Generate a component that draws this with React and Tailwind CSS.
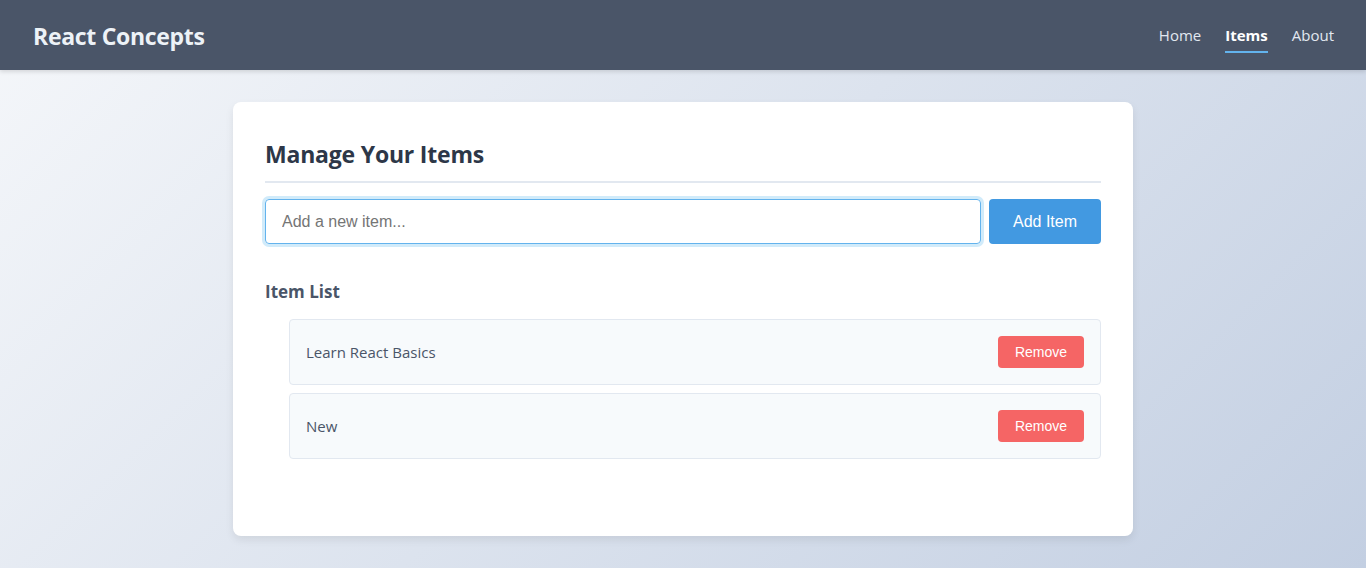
import React from "react";

export default function App() {
  const items = ["Learn React Basics", "New"];
  return (
    <div
      className="min-h-[568px] bg-[linear-gradient(135deg,#f5f7fa_0%,#c3cfe2_100%)]"
      style={{ fontFamily: '"Open Sans", "Noto Sans", sans-serif' }}
    >
      <header className="h-[70px] bg-[#4a5568] flex items-center justify-between pl-[33px] pr-[32px] shadow-[0_2px_4px_rgba(0,0,0,0.12)] relative">
        <h1 className="text-[23px] font-bold text-[#edf2f7] tracking-[-0.3px] mt-[3px]">React Concepts</h1>
        <nav className="self-stretch flex items-end pb-[17px] gap-[24px] text-[15px] text-[#e2e8f0]">
          <a className="leading-[22px] pb-[5px] border-b-2 border-transparent">Home</a>
          <a className="leading-[22px] pb-[5px] border-b-2 border-[#63b3ed] font-bold text-white">Items</a>
          <a className="leading-[22px] pb-[5px] border-b-2 border-transparent">About</a>
        </nav>
      </header>
      <main className="pt-[32px] pb-[32px] flex justify-center">
        <div className="w-[900px] bg-white rounded-[8px] shadow-[0_4px_8px_rgba(0,0,0,0.08)] px-[32px] pt-[32px] pb-[77px]">
          <h2 className="text-[23px] font-bold text-[#2d3748] leading-[36px] pt-[2px] pb-[9px] border-b-2 border-[#e2e8f0] tracking-[-0.2px]">
            Manage Your Items
          </h2>
          <div className="flex gap-[8px] mt-[16px]">
            <input
              className="flex-1 h-[45px] px-[16px] border border-[#63b3ed] rounded-[4px] text-[16px] text-[#2d3748] outline-none ring-[3px] ring-[#bee3f8]/70 placeholder:text-[#757575]"
              style={{ fontFamily: '"Liberation Sans", Arial, sans-serif' }}
              placeholder="Add a new item..."
            />
            <button
              className="w-[112px] h-[45px] bg-[#4299e1] text-white text-[16px] rounded-[4px]"
              style={{ fontFamily: '"Liberation Sans", Arial, sans-serif' }}
            >
              Add Item
            </button>
          </div>
          <h3 className="mt-[34px] text-[17px] font-bold text-[#4a5568] leading-[27px]">Item List</h3>
          <ul className="mt-[14px] pl-[24px] flex flex-col gap-[8px]">
            {items.map((it) => (
              <li
                key={it}
                className="flex items-center justify-between bg-[#f7fafc] border border-[#e2e8f0] rounded-[4px] p-[16px]"
              >
                <span className="text-[15px] text-[#4a5568]">{it}</span>
                <button
                  className="w-[86px] h-[32px] bg-[#f56565] text-white text-[14px] rounded-[4px]"
                  style={{ fontFamily: '"Liberation Sans", Arial, sans-serif' }}
                >
                  Remove
                </button>
              </li>
            ))}
          </ul>
        </div>
      </main>
    </div>
  );
}
